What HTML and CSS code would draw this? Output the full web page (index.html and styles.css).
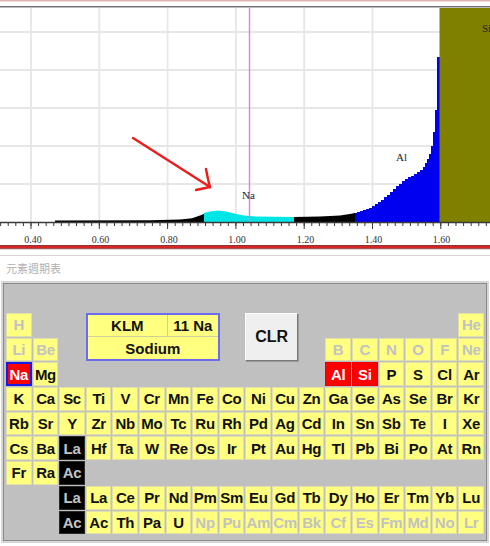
FILE: index.html
```html
<!DOCTYPE html>
<html>
<head>
<meta charset="utf-8">
<link rel="stylesheet" href="styles.css">
</head>
<body>
<div class="chart">
<svg width="490" height="257" viewBox="0 0 490 257" xmlns="http://www.w3.org/2000/svg">
  <rect x="0" y="0" width="490" height="1.5" fill="#e4b4b4"/>
  <rect x="0" y="6" width="490" height="1" fill="#707070"/>
  <rect x="0" y="7" width="490" height="1" fill="#bdbdbd"/>
  <g stroke="#e6e6e6" stroke-width="1.8">
    <line x1="31" y1="8" x2="31" y2="222"/>
    <line x1="99.3" y1="8" x2="99.3" y2="222"/>
    <line x1="167.6" y1="8" x2="167.6" y2="222"/>
    <line x1="235.9" y1="8" x2="235.9" y2="222"/>
    <line x1="304.2" y1="8" x2="304.2" y2="222"/>
    <line x1="372.5" y1="8" x2="372.5" y2="222"/>
    <line x1="0" y1="32" x2="490" y2="32"/>
    <line x1="0" y1="70" x2="490" y2="70"/>
    <line x1="0" y1="108" x2="490" y2="108"/>
    <line x1="0" y1="146" x2="490" y2="146"/>
    <line x1="0" y1="184" x2="490" y2="184"/>
  </g>
  <path d="M354,222 V213 H357 V212 H360 V211 H363 V210 H366 V209 H369 V208 H372 V206 H375 V204 H378 V202 H381 V200 H384 V197 H387 V195 H390 V192 H393 V189 H396 V186 H399 V184 H402 V181 H405 V179 H408 V177 H411 V176 H414 V174 H417 V172 H420 V170 H423 V167 H425 V163 H427 V159 H429 V154 H431 V146 H433 V132 H435 V110 H437 V57 H440 V222 Z" fill="#0000f0"/>
  <polygon points="55,222 55,220.6 150,220.2 180,219.6 192,218.2 200,215.6 205,213.4 205,222" fill="#000"/>
  <polygon points="204,222 204,213 210,211.5 218,210.5 226,211.5 234,213.5 244,215.5 256,216.5 294,217 294,222" fill="#00e6e6"/>
  <polygon points="294,222 294,217 320,216.4 340,215.4 350,214 355,213 355,222" fill="#000"/>
  <rect x="439.5" y="8" width="51" height="214" fill="#808000"/>
  <text x="482" y="32" class="lbl">Si</text>
  <line x1="249.5" y1="8" x2="249.5" y2="222" stroke="#d484e0" stroke-width="1.4"/>
  <text x="242" y="199" class="lbl">Na</text>
  <text x="396" y="161" class="lbl">Al</text>
  <g stroke="#ee1c1c" stroke-width="2.4" fill="none" stroke-linecap="round">
    <path d="M133,138 L210,187"/>
    <path d="M206,169 Q207.5,178 210,187"/>
    <path d="M196,190 L210,187"/>
  </g>
  <line x1="0" y1="222.5" x2="490" y2="222.5" stroke="#3a3a3a" stroke-width="1.4"/>
  <line x1="0.14" y1="224.5" x2="490" y2="224.5" stroke="#3a3a3a" stroke-width="3" stroke-dasharray="1 6.589"/>
  <line x1="30.5" y1="226" x2="490" y2="226" stroke="#3a3a3a" stroke-width="6" stroke-dasharray="1 67.3"/>
  <g class="ax" text-anchor="middle">
    <text x="33" y="243">0.40</text>
    <text x="100.5" y="243">0.60</text>
    <text x="169" y="243">0.80</text>
    <text x="237" y="243">1.00</text>
    <text x="305.5" y="243">1.20</text>
    <text x="373.5" y="243">1.40</text>
    <text x="441.5" y="243">1.60</text>
  </g>
  <rect x="0" y="245" width="490" height="1" fill="#8a3434"/>
  <rect x="0" y="246" width="490" height="2.2" fill="#d82626"/>
  <rect x="0" y="248.2" width="490" height="1" fill="#8a3434"/>
  <rect x="0" y="255" width="490" height="1" fill="#d4d4d4"/>
</svg>
</div>
<div class="caption">元素週期表</div>
<div class="panel">
  <div class="inner">
    <div class="table">
      <div class="el dim c1">H</div>
      <div class="info">
        <div class="klm">KLM</div>
        <div class="num">11 Na</div>
        <div class="name">Sodium</div>
      </div>
      <div class="clr">CLR</div>
      <div class="el dim c18">He</div>

      <div class="el dim c1">Li</div>
      <div class="el dim">Be</div>
      <div class="el dim c13">B</div>
      <div class="el dim">C</div>
      <div class="el dim">N</div>
      <div class="el dim">O</div>
      <div class="el dim">F</div>
      <div class="el dim">Ne</div>

      <div class="el sel c1">Na</div>
      <div class="el">Mg</div>
      <div class="el hit c13">Al</div>
      <div class="el hit">Si</div>
      <div class="el">P</div>
      <div class="el">S</div>
      <div class="el">Cl</div>
      <div class="el">Ar</div>

      <div class="el">K</div><div class="el">Ca</div><div class="el">Sc</div><div class="el">Ti</div><div class="el">V</div><div class="el">Cr</div><div class="el">Mn</div><div class="el">Fe</div><div class="el">Co</div><div class="el">Ni</div><div class="el">Cu</div><div class="el">Zn</div><div class="el">Ga</div><div class="el">Ge</div><div class="el">As</div><div class="el">Se</div><div class="el">Br</div><div class="el">Kr</div>

      <div class="el">Rb</div><div class="el">Sr</div><div class="el">Y</div><div class="el">Zr</div><div class="el">Nb</div><div class="el">Mo</div><div class="el">Tc</div><div class="el">Ru</div><div class="el">Rh</div><div class="el">Pd</div><div class="el">Ag</div><div class="el">Cd</div><div class="el">In</div><div class="el">Sn</div><div class="el">Sb</div><div class="el">Te</div><div class="el">I</div><div class="el">Xe</div>

      <div class="el">Cs</div><div class="el">Ba</div><div class="el blk">La</div><div class="el">Hf</div><div class="el">Ta</div><div class="el">W</div><div class="el">Re</div><div class="el">Os</div><div class="el">Ir</div><div class="el">Pt</div><div class="el">Au</div><div class="el">Hg</div><div class="el">Tl</div><div class="el">Pb</div><div class="el">Bi</div><div class="el">Po</div><div class="el">At</div><div class="el">Rn</div>

      <div class="el">Fr</div><div class="el">Ra</div><div class="el blk">Ac</div>

      <div class="el blk c3">La</div>
      <div class="el">La</div><div class="el">Ce</div><div class="el">Pr</div><div class="el">Nd</div><div class="el">Pm</div><div class="el">Sm</div><div class="el">Eu</div><div class="el">Gd</div><div class="el">Tb</div><div class="el">Dy</div><div class="el">Ho</div><div class="el">Er</div><div class="el">Tm</div><div class="el">Yb</div><div class="el">Lu</div>

      <div class="el blk c3">Ac</div>
      <div class="el">Ac</div><div class="el">Th</div><div class="el">Pa</div><div class="el">U</div><div class="el dim">Np</div><div class="el dim">Pu</div><div class="el dim">Am</div><div class="el dim">Cm</div><div class="el dim">Bk</div><div class="el dim">Cf</div><div class="el dim">Es</div><div class="el dim">Fm</div><div class="el dim">Md</div><div class="el dim">No</div><div class="el dim">Lr</div>
    </div>
  </div>
</div>
</body>
</html>
```

FILE: styles.css
```css
html, body {
  margin: 0;
  padding: 0;
}
body {
  width: 490px;
  height: 546px;
  overflow: hidden;
  background: #ffffff;
  font-family: "Liberation Sans", Arial, sans-serif;
}
.chart svg {
  display: block;
}
.lbl {
  font-family: "Liberation Serif", serif;
  font-size: 11px;
  fill: #222222;
}
.ax {
  font-family: "Liberation Serif", serif;
  font-size: 10px;
  fill: #333333;
}
.caption {
  height: 24px;
  box-sizing: border-box;
  padding: 4px 0 0 6px;
  font-family: "Noto Sans CJK TC", "Noto Sans CJK SC", sans-serif;
  font-size: 11px;
  line-height: 14px;
  color: #b0b0b0;
}
.panel {
  margin: 0 1px;
  border: 2px solid #d6d6d6;
}
.inner {
  border: 1px solid #8a8a8a;
  background: #c0c0c0;
  padding: 29px 2px 6px 2px;
}
.table {
  display: grid;
  grid-template-columns: repeat(18, 1fr);
  grid-template-rows: repeat(9, 23.7px);
  column-gap: 1px;
  row-gap: 1px;
}
.el {
  box-sizing: border-box;
  background: #ffff80;
  border: 1px solid #e0e0a4;
  display: flex;
  align-items: center;
  justify-content: center;
  font-weight: bold;
  font-size: 15px;
  color: #111111;
  white-space: nowrap;
  letter-spacing: -0.3px;
}
.dim {
  color: #c2c2c2;
}
.sel {
  background: #ff0000;
  color: #ffffff;
  border: 2px solid #1a1ae6;
}
.hit {
  background: #ff0000;
  color: #ffffff;
  border-color: #e80000;
}
.blk {
  background: #000000;
  color: #c4c4c4;
  border-color: #2a2a2a;
}
.c1 { grid-column-start: 1; }
.c3 { grid-column-start: 3; }
.c13 { grid-column-start: 13; }
.c18 { grid-column-start: 18; }
.info {
  grid-column: 4 / span 5;
  grid-row: span 2;
  box-sizing: border-box;
  margin-right: -2px;
  border: 2px solid #6c6cee;
  background: #ffff80;
  display: grid;
  grid-template-columns: 80px 1fr;
  grid-template-rows: 1fr 1fr;
  font-weight: bold;
  font-size: 15px;
  color: #111111;
}
.info > div {
  display: flex;
  align-items: center;
  justify-content: center;
}
.klm {
  border-right: 1px solid #cfcf9a;
  border-bottom: 1px solid #cfcf9a;
}
.num {
  border-bottom: 1px solid #cfcf9a;
}
.name {
  grid-column: 1 / span 2;
}
.clr {
  grid-column: 10 / span 2;
  grid-row: span 2;
  box-sizing: border-box;
  background: #efefef;
  border: 1px solid;
  border-color: #ffffff #7a7a7a #7a7a7a #ffffff;
  box-shadow: 1px 1px 0 #9a9a9a;
  display: flex;
  align-items: center;
  justify-content: center;
  font-weight: bold;
  font-size: 16px;
  color: #111111;
}
```
